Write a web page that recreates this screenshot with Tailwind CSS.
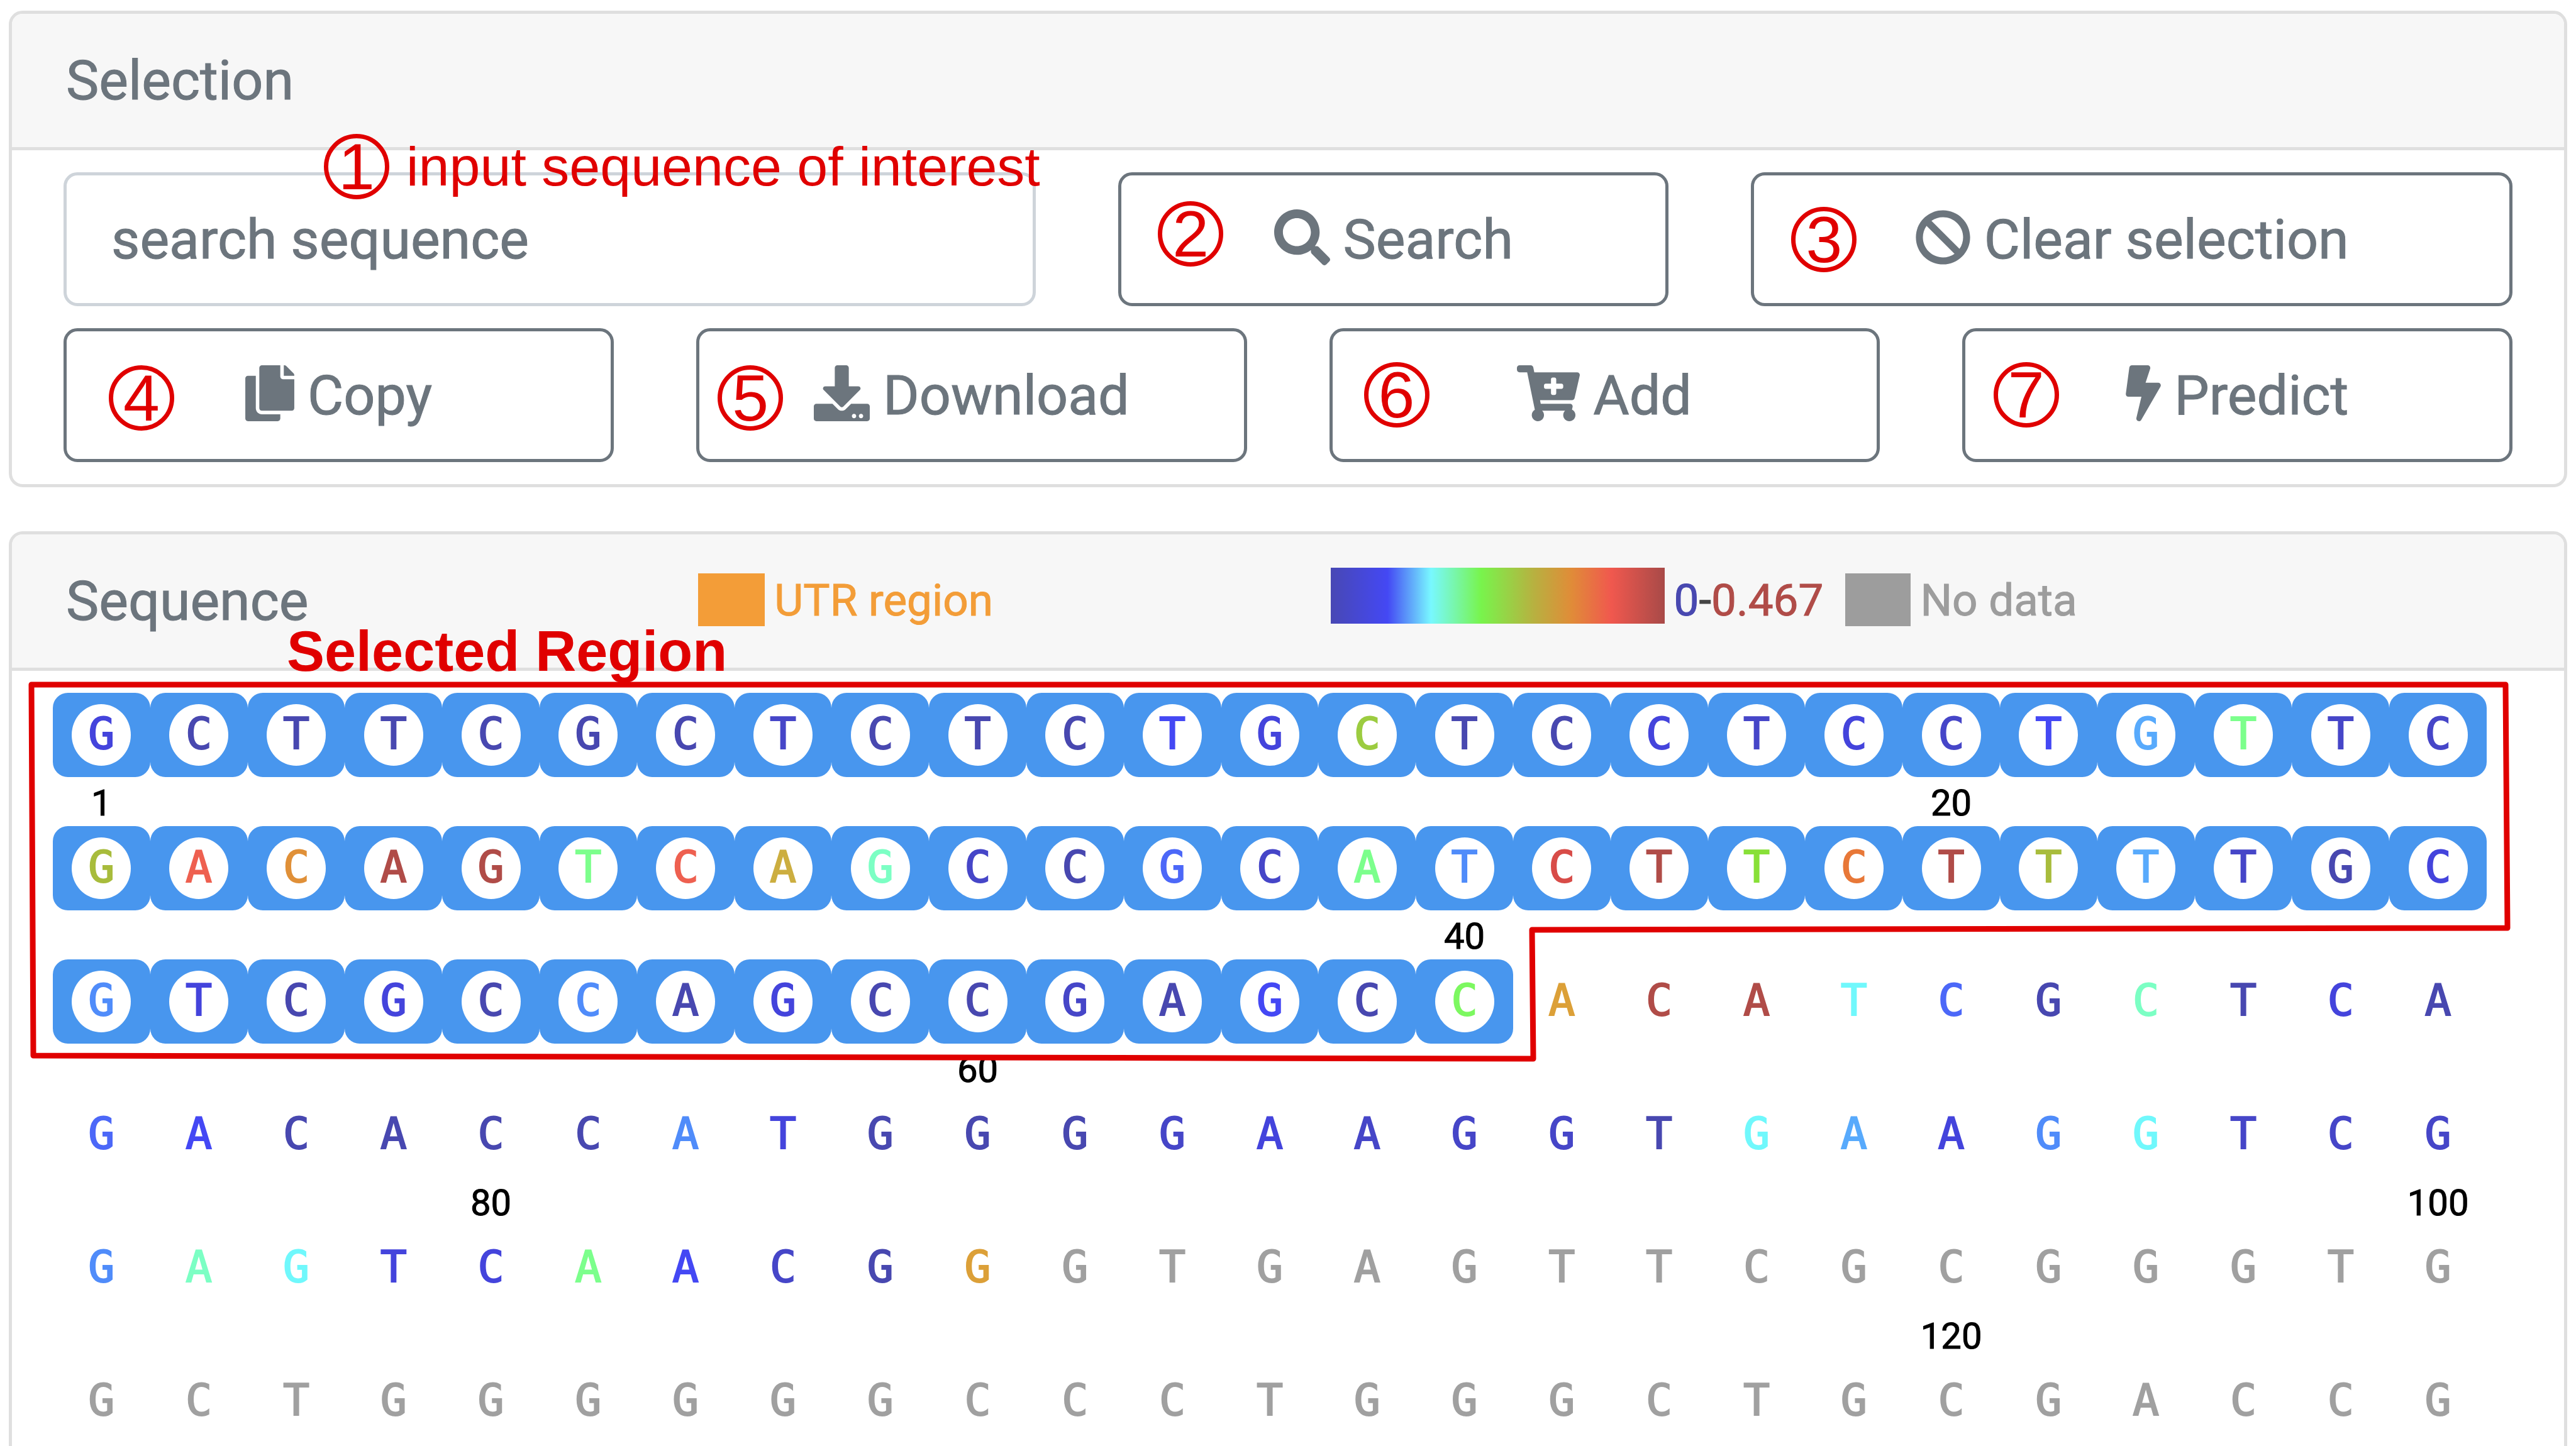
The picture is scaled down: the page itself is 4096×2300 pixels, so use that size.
<!DOCTYPE html>
<html lang="en">
<head>
<meta charset="utf-8">
<title>Sequence selection</title>
<script src="https://cdn.jsdelivr.net/npm/@tailwindcss/browser@4"></script>
</head>
<body class="bg-white font-[Roboto,sans-serif] text-[88px] leading-none text-[#6c757d] [-webkit-text-stroke:1px]">
<main class="flex min-h-screen flex-col gap-[70px] overflow-hidden px-[14px] pt-[17px]">

  <section class="rounded-[22px] border-5 border-[#dfdfdf]">
    <header class="flex h-[217px] items-center rounded-t-[17px] border-b-5 border-[#dfdfdf] bg-[#f7f7f7] px-[86px]">
      <h2>Selection</h2>
    </header>
    <div class="flex flex-col gap-[35px] px-[82px] py-[35px]">
      <div class="grid grid-cols-12 gap-x-[131px]">
        <div class="relative col-span-5">
          <input type="text" aria-label="search sequence" placeholder="search sequence" class="block h-[213px] w-full rounded-[22px] border-5 border-[#ced4da] px-[71px] placeholder:text-[#6c757d] placeholder:opacity-100">
          <p class="pointer-events-none absolute -top-[61px] left-[414px] flex items-center gap-[27px] whitespace-nowrap font-['Liberation_Sans',Arial,sans-serif] text-[#e00000] [-webkit-text-stroke:0px]">
            <span class="flex h-[104px] w-[104px] items-center justify-center rounded-full border-7 border-[#e00000] text-[104px]">1</span>
            <span>input sequence of interest</span>
          </p>
        </div>
        <button type="button" class="relative col-span-3 flex h-[213px] items-center justify-center gap-[21px] rounded-[22px] border-5 border-[#6c757d]">
          <span class="absolute left-[58px] top-[41px] flex h-[104px] w-[104px] items-center justify-center rounded-full border-7 border-[#e00000] font-['Liberation_Sans',Arial,sans-serif] text-[104px] text-[#e00000] [-webkit-text-stroke:0px]">2</span>
          <svg class="mb-1.5 h-[89px] w-[89px]" viewBox="0 0 512 512" fill="currentColor" aria-hidden="true"><path d="M505 442.7L405.3 343c-4.5-4.500-10.600-7-17-7H372c27.600-35.300 44-79.700 44-128C416 93.100 322.900 0 208 0S0 93.100 0 208s93.100 208 208 208c48.300 0 92.700-16.400 128-44v16.300c0 6.400 2.500 12.500 7 17l99.700 99.700c9.400 9.400 24.600 9.400 33.900 0l28.300-28.300c9.400-9.400 9.400-24.600.1-34zM208 336c-70.700 0-128-57.200-128-128 0-70.700 57.200-128 128-128 70.700 0 128 57.200 128 128 0 70.700-57.200 128-128 128z"/></svg>
          <span>Search</span>
        </button>
        <button type="button" class="relative col-span-4 flex h-[213px] items-center justify-center gap-[21px] rounded-[22px] border-5 border-[#6c757d]">
          <span class="absolute left-[59px] top-[50px] flex h-[104px] w-[104px] items-center justify-center rounded-full border-7 border-[#e00000] font-['Liberation_Sans',Arial,sans-serif] text-[104px] text-[#e00000] [-webkit-text-stroke:0px]">3</span>
          <svg class="mb-1.5 h-[89px] w-[89px]" viewBox="0 0 512 512" fill="currentColor" aria-hidden="true"><path d="M256 8C119.034 8 8 119.033 8 256s111.034 248 248 248 248-111.034 248-248S392.967 8 256 8zm130.108 117.892c65.448 65.448 70 165.481 20.677 235.637L150.470 105.216c70.204-49.356 170.226-44.735 235.638 20.676zM125.892 386.108c-65.448-65.448-70-165.481-20.677-235.637L361.530 406.784c-70.203 49.356-170.226 44.736-235.638-20.676z"/></svg>
          <span>Clear selection</span>
        </button>
      </div>
      <div class="grid grid-cols-4 gap-x-[131px]">
        <button type="button" class="relative flex h-[213px] items-center justify-center gap-[21px] rounded-[22px] border-5 border-[#6c757d]">
          <span class="absolute left-[67px] top-[54px] flex h-[104px] w-[104px] items-center justify-center rounded-full border-7 border-[#e00000] font-['Liberation_Sans',Arial,sans-serif] text-[104px] text-[#e00000] [-webkit-text-stroke:0px]">4</span>
          <svg class="mb-1.5 h-[89px] w-[78px]" viewBox="0 0 448 512" fill="currentColor" aria-hidden="true"><path d="M320 448v40c0 13.255-10.745 24-24 24H24c-13.255 0-24-10.745-24-24V120c0-13.255 10.745-24 24-24h72v296c0 30.879 25.121 56 56 56h168zm0-344V0H152c-13.255 0-24 10.745-24 24v368c0 13.255 10.745 24 24 24h272c13.255 0 24-10.745 24-24V128H344c-13.200 0-24-10.800-24-24zm120.971-31.029L375.029 7.029A24 24 0 0 0 358.059 0H352v96h96v-6.059a24 24 0 0 0-7.029-16.970z"/></svg>
          <span>Copy</span>
        </button>
        <button type="button" class="relative flex h-[213px] items-center justify-center gap-[21px] rounded-[22px] border-5 border-[#6c757d]">
          <span class="absolute left-[29px] top-[54px] flex h-[104px] w-[104px] items-center justify-center rounded-full border-7 border-[#e00000] font-['Liberation_Sans',Arial,sans-serif] text-[104px] text-[#e00000] [-webkit-text-stroke:0px]">5</span>
          <svg class="mb-1.5 h-[89px] w-[89px]" viewBox="0 0 512 512" fill="currentColor" aria-hidden="true"><path d="M216 0h80c13.300 0 24 10.700 24 24v168h87.700c17.800 0 26.700 21.500 14.100 34.100L269.700 378.300c-7.500 7.500-19.800 7.500-27.300 0L90.100 226.100c-12.600-12.600-3.700-34.100 14.100-34.100H192V24c0-13.300 10.700-24 24-24zm296 376v112c0 13.300-10.700 24-24 24H24c-13.300 0-24-10.700-24-24V376c0-13.300 10.700-24 24-24h146.700l49 49c20.100 20.100 52.500 20.100 72.600 0l49-49H488c13.300 0 24 10.700 24 24zm-124 88c0-11-9-20-20-20s-20 9-20 20 9 20 20 20 20-9 20-20zm64 0c0-11-9-20-20-20s-20 9-20 20 9 20 20 20 20-9 20-20z"/></svg>
          <span>Download</span>
        </button>
        <button type="button" class="relative flex h-[213px] items-center justify-center gap-[21px] rounded-[22px] border-5 border-[#6c757d]">
          <span class="absolute left-[50px] top-[49px] flex h-[104px] w-[104px] items-center justify-center rounded-full border-7 border-[#e00000] font-['Liberation_Sans',Arial,sans-serif] text-[104px] text-[#e00000] [-webkit-text-stroke:0px]">6</span>
          <svg class="mb-1.5 h-[89px] w-[100px]" viewBox="0 0 576 512" fill="currentColor" aria-hidden="true"><path d="M504.717 320H211.572l6.545 32h268.418c15.401 0 26.816 14.301 23.403 29.319l-5.517 24.276C523.112 414.668 536 433.828 536 456c0 31.202-25.519 56.444-56.824 55.994-29.823-.429-54.350-24.631-55.155-54.447-.44-16.287 6.085-31.049 16.803-41.548H231.176C241.553 426.165 248 440.326 248 456c0 31.813-26.528 57.431-58.670 55.938-28.540-1.325-51.751-24.385-53.251-52.917-1.158-22.034 10.436-41.455 28.051-51.586L93.883 64H24C10.745 64 0 53.255 0 40V24C0 10.745 10.745 0 24 0h102.529c11.401 0 21.228 8.021 23.513 19.190L159.208 64H551.990c15.401 0 26.816 14.301 23.403 29.319l-47.273 208C525.637 312.246 515.923 320 504.717 320zM408 168h-48v-40c0-8.837-7.163-16-16-16h-16c-8.837 0-16 7.163-16 16v40h-48c-8.837 0-16 7.163-16 16v16c0 8.837 7.163 16 16 16h48v40c0 8.837 7.163 16 16 16h16c8.837 0 16-7.163 16-16v-40h48c8.837 0 16-7.163 16-16v-16c0-8.837-7.163-16-16-16z"/></svg>
          <span>Add</span>
        </button>
        <button type="button" class="relative flex h-[213px] items-center justify-center gap-[21px] rounded-[22px] border-5 border-[#6c757d]">
          <span class="absolute left-[45px] top-[49px] flex h-[104px] w-[104px] items-center justify-center rounded-full border-7 border-[#e00000] font-['Liberation_Sans',Arial,sans-serif] text-[104px] text-[#e00000] [-webkit-text-stroke:0px]">7</span>
          <svg class="mb-1.5 h-[89px] w-[56px]" viewBox="0 0 320 512" fill="currentColor" aria-hidden="true"><path d="M296 160H180.600l42.600-129.800C227.200 15 215.700 0 200 0H56C44 0 33.800 8.900 32.200 20.800l-32 240C-1.700 275.200 9.500 288 24 288h118.700L96.600 482.500c-3.600 15.200 8 29.500 23.300 29.500 8.400 0 16.400-4.400 20.800-12l176-304c9.300-15.900-2.200-36-20.700-36z"/></svg>
          <span>Predict</span>
        </button>
      </div>
    </div>
  </section>

  <section class="relative flex-1 rounded-t-[22px] border-5 border-b-0 border-[#dfdfdf]">
    <header class="grid h-[217px] grid-cols-4 items-center gap-x-[131px] rounded-t-[17px] border-b-5 border-[#dfdfdf] bg-[#f7f7f7] pl-[86px] pr-[82px]">
      <h2>Sequence</h2>
      <div class="mb-1 flex items-center gap-[15px] whitespace-nowrap text-[71px] text-[#f39d38]">
        <span class="h-[84px] w-[106px] bg-[#f39d38]"></span>
        <span>UTR region</span>
      </div>
      <div class="col-span-2 mb-1 flex items-center gap-[15px] whitespace-nowrap text-[71px]">
        <span class="mb-3.5 h-[89px] w-[531px] bg-[linear-gradient(to_right,#4848b4_0%,#4448f4_17%,#78f8ff_30%,#78f44c_45%,#b8b040_61%,#e08c38_72%,#f0584e_84%,#a84a48_100%)]"></span>
        <span class="text-[#444444]"><span class="text-[#4848b0]">0</span>-<span class="text-[#b04c48]">0.467</span></span>
        <span class="ml-5 h-[84px] w-[104px] bg-[#9d9d9d]"></span>
        <span class="text-[#9d9d9d]">No data</span>
      </div>
    </header>

    <div id="sequence" class="pl-[65px] pr-[123px] pt-[35px]"></div>

    <svg class="pointer-events-none absolute left-0 top-[217px] h-[640px] w-full" viewBox="0 0 4058 640" preserveAspectRatio="none" fill="none" stroke="#e00000" stroke-width="9" stroke-linejoin="round" aria-hidden="true">
      <path d="M31 22L3965 22L3968 409L2417 412L2419 617L34 612Z" vector-effect="non-scaling-stroke"/>
    </svg>
    <p class="pointer-events-none absolute left-[437px] top-[141px] whitespace-nowrap font-['Liberation_Sans',Arial,sans-serif] text-[90px] font-bold text-[#e00000] [-webkit-text-stroke:0px]">Selected Region</p>
  </section>
</main>

<template id="line-template">
  <div>
    <div class="grid h-[134px] grid-cols-25 font-['DejaVu_Sans_Mono',monospace] text-[70px] [-webkit-text-stroke:2px]" data-part="bases"></div>
    <div class="grid h-[78px] grid-cols-25 pt-1 text-[58px] leading-[75px] text-black" data-part="marks"></div>
  </div>
</template>
<template id="selected-template">
  <span class="flex items-center justify-center rounded-[24px] bg-[#4896ee]"><span class="flex h-[98px] w-[94px] items-center justify-center rounded-[50%] bg-white pb-1"></span></span>
</template>
<template id="plain-template">
  <span class="flex items-center justify-center"><span class="pb-1"></span></span>
</template>
<template id="mark-template"><span class="flex justify-center"></span></template>

<script>
  // Score colours, from low to high; "-" is a base without data.
  const palette = {
    a: '#4848b0', b: '#4646c8', c: '#4444dc', d: '#4448f4', e: '#4c68f8', f: '#508cfa',
    g: '#58aafc', h: '#70f8fc', i: '#7cffc4', j: '#7cff8c', k: '#7cf860', l: '#88e038',
    m: '#9ccc40', n: '#a8bc3c', o: '#ccae40', p: '#dca038', q: '#e09038', r: '#e87838',
    s: '#ee6050', t: '#d84c48', u: '#b04c48', '-': '#a0a0a0'
  };
  const lines = [
    ['GCTTCGCTCTCTGCTCCTCCTGTTC', 'caaaaaabaaadcmaacbcbdgjbb'],
    ['GACAGTCAGCCGCATCTTCTTTTGC', 'nsquujsoibaebjftulrungbac'],
    ['GTCGCCAGCCGAGCCACATCGCTCA', 'fcacafacaabadakpuuheaiaca'],
    ['GACACCATGGGGAAGGTGAAGGTCG', 'edaaaafcaaabcbbbahgcfhbbb'],
    ['GAGTCAACGGGTGAGTTCGCGGGTG', 'fihccjdbap---------------'],
    ['GCTGGGGGGCCCTGGGCTGCGACCG', '-------------------------']
  ];
  const selectedCount = 65;
  const make = id => document.getElementById(id).content.firstElementChild.cloneNode(true);
  const root = document.getElementById('sequence');
  lines.forEach(([bases, scores], row) => {
    const line = make('line-template');
    const marks = line.querySelector('[data-part=marks]');
    [...bases].forEach((base, col) => {
      const index = row * 25 + col + 1;
      const cell = make(index <= selectedCount ? 'selected-template' : 'plain-template');
      cell.firstElementChild.textContent = base;
      cell.firstElementChild.style.color = palette[scores[col]];
      line.querySelector('[data-part=bases]').append(cell);
      const mark = make('mark-template');
      if (index === 1 || index % 20 === 0) mark.textContent = index;
      marks.append(mark);
    });
    if (row === lines.length - 1) marks.remove();
    root.append(line);
  });
</script>
</body>
</html>
